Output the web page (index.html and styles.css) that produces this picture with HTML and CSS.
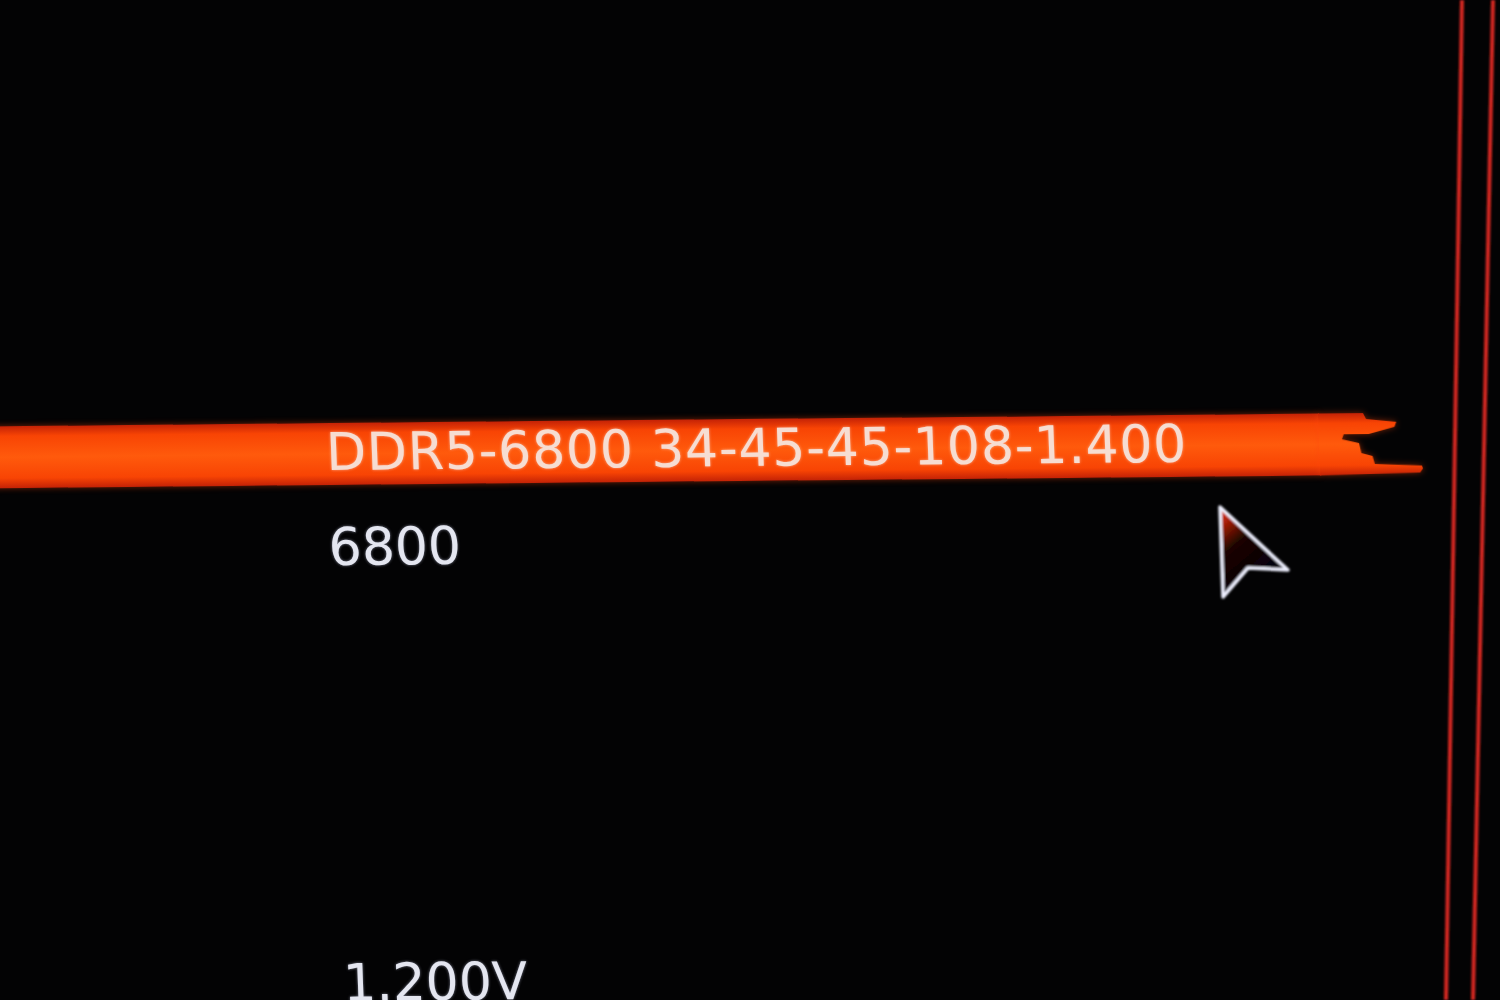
FILE: index.html
```html
<!DOCTYPE html>
<html lang="en">
<head>
    <meta charset="UTF-8">
    <meta name="viewport" content="width=device-width, initial-scale=1.0">
    <title>Memory Profile</title>
    <link rel="stylesheet" href="styles.css">
</head>
<body>
    <div class="screen">
        <main class="menu">
            <div class="option option-active">
                <div class="option-bar">
                    <span class="option-label">DDR5-6800 34-45-45-108-1.400</span>
                </div>
                <!-- torn right edge of the highlight -->
                <svg class="option-cap" width="104" height="62" viewBox="0 0 104 62" preserveAspectRatio="none">
                    <defs>
                        <linearGradient id="capFill" x1="0" y1="0" x2="0" y2="1">
                            <stop offset="0" stop-color="#c42206"/>
                            <stop offset="0.16" stop-color="#f84404"/>
                            <stop offset="0.5" stop-color="#ff5a0c"/>
                            <stop offset="0.84" stop-color="#f84404"/>
                            <stop offset="1" stop-color="#c42206"/>
                        </linearGradient>
                    </defs>
                    <polygon fill="url(#capFill)" points="0,0 45,0 48,6 78,9 76,14 50,21 25,21 23,26 40,30 42,40 53,43 55,51 102,53 103,56 100,60 0,62"/>
                </svg>
            </div>

            <div class="value">6800</div>

            <div class="value value-volt">1.200V</div>
        </main>

        <svg class="frame" width="77" height="1000" viewBox="0 0 77 1000">
            <defs>
                <filter id="glow" x="-50%" y="-5%" width="200%" height="110%">
                    <feGaussianBlur stdDeviation="1.1"/>
                </filter>
            </defs>
            <g stroke="#d42820" stroke-width="4" filter="url(#glow)">
                <line x1="39" y1="0" x2="23" y2="1000"/>
                <line x1="70" y1="0" x2="50" y2="1000"/>
            </g>
        </svg>
    </div>

    <!-- mouse pointer -->
    <svg class="pointer" width="80" height="100" viewBox="0 0 80 100">
        <defs>
            <linearGradient id="pointerFill" x1="0" y1="0" x2="0.5" y2="0.8">
                <stop offset="0" stop-color="#f03a10"/>
                <stop offset="0.22" stop-color="#a01a06"/>
                <stop offset="0.5" stop-color="#1c0604"/>
                <stop offset="1" stop-color="#040308"/>
            </linearGradient>
            <filter id="pointerGlow" x="-20%" y="-20%" width="140%" height="140%">
                <feGaussianBlur stdDeviation="0.8"/>
            </filter>
        </defs>
        <polygon points="6,5 9,95 34,66 74,68" fill="url(#pointerFill)" stroke="#eef0ff" stroke-width="3.5" stroke-linejoin="round" filter="url(#pointerGlow)"/>
    </svg>
</body>
</html>
```

FILE: styles.css
```css
* {
    margin: 0;
    padding: 0;
    box-sizing: border-box;
}

body {
    background: #030304;
    font-family: 'DejaVu Sans', Verdana, sans-serif;
    width: 1500px;
    height: 1000px;
    overflow: hidden;
    position: relative;
}

.screen {
    display: flex;
    height: 1000px;
}

.menu {
    flex: 1;
    padding-top: 423px;
    transform: rotate(-0.55deg) skewX(1.6deg);
    transform-origin: 330px 450px;
}

.option {
    display: flex;
    height: 62px;
    margin-left: -30px;
}

.option-bar {
    flex: 1;
    display: flex;
    align-items: center;
    padding-left: 356px;
    padding-bottom: 4px;
    background: linear-gradient(180deg, #c42206 0%, #f84404 16%, #ff5a0c 50%, #f84404 84%, #c42206 100%);
    box-shadow: 0 0 6px rgba(255, 70, 10, 0.45);
}

.option-label {
    font-size: 52px;
    letter-spacing: 0.8px;
    color: #f6ddd2;
    white-space: nowrap;
    text-shadow: 0 0 3px rgba(255, 235, 225, 0.6);
}

.option-cap {
    display: block;
    flex-shrink: 0;
    margin-left: -1px;
    filter: drop-shadow(0 0 3px rgba(255, 70, 10, 0.45));
}

.value {
    font-size: 52px;
    line-height: 60px;
    color: #e4e6f0;
    padding-left: 325px;
    margin-top: 32px;
    text-shadow: 0 0 3px rgba(220, 225, 255, 0.55);
}

.value-volt {
    margin-top: 376px;
    padding-left: 323px;
}

.frame {
    display: block;
    flex-shrink: 0;
}

.pointer {
    position: absolute;
    left: 1214px;
    top: 502px;
}
```
